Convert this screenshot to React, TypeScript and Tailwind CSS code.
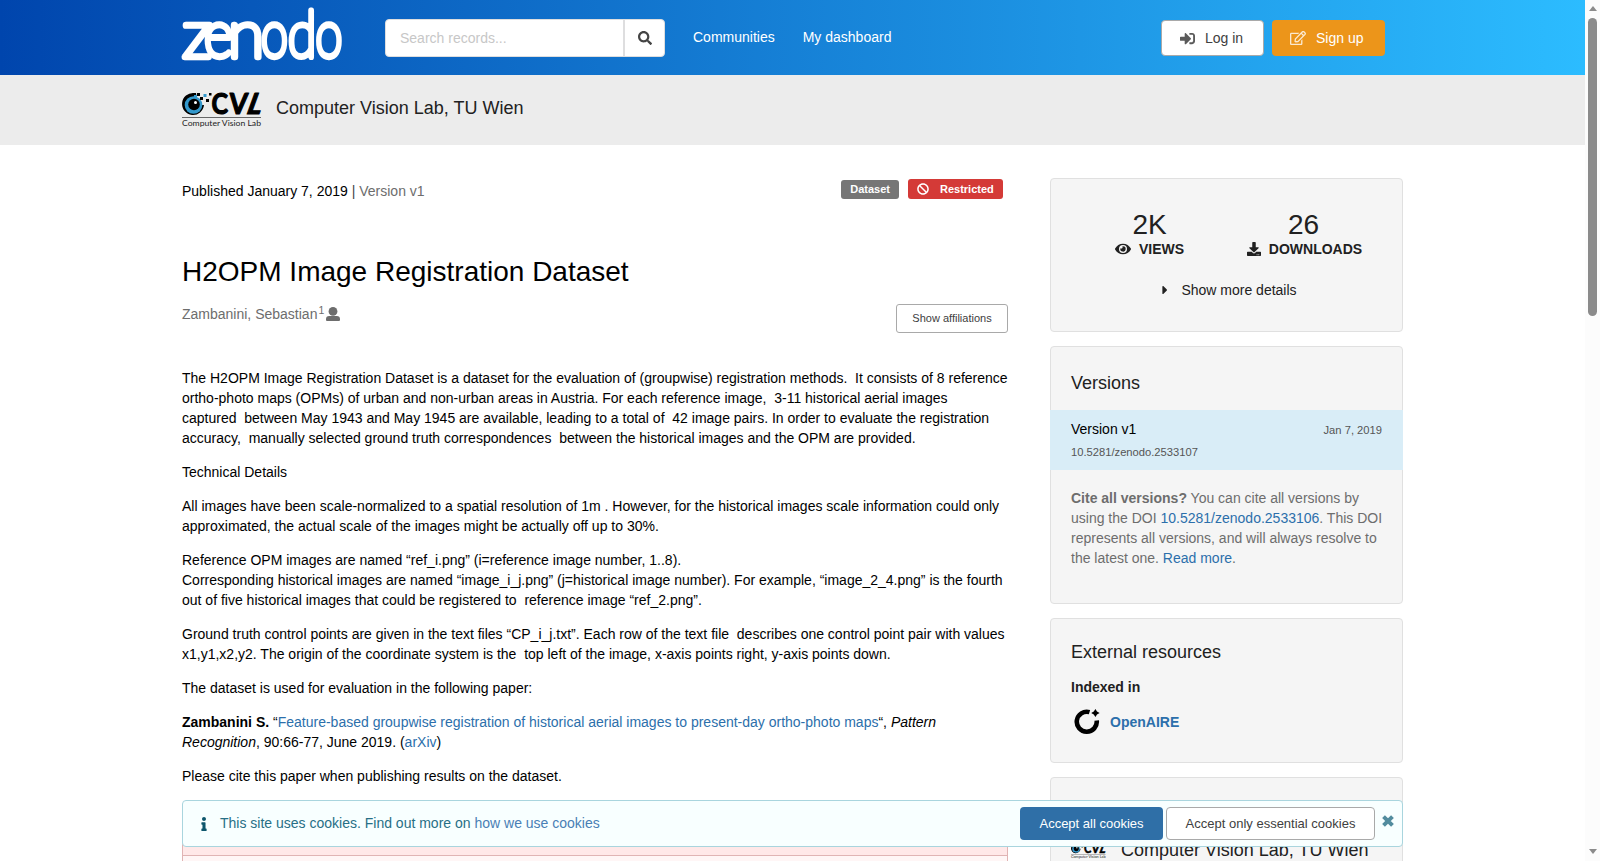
import React from "react";
import {
  FaBan,
  FaCaretRight,
  FaDownload,
  FaEye,
  FaInfo,
  FaRegEdit,
  FaSearch,
  FaSignInAlt,
} from "react-icons/fa";

const ZenodoLogo = () => (
  <svg
    width="162"
    height="75"
    viewBox="0 0 162 75"
    className="shrink-0 overflow-visible"
  >
    <g
      fill="#fff"
      stroke="#fff"
      strokeWidth="6.4"
      strokeLinejoin="round"
      strokeLinecap="round"
      fontFamily="Lato, sans-serif"
      fontWeight="100"
      fontSize="65"
    >
      <text transform="translate(0.5 56.7) scale(1.04 1)">z</text>
      <text transform="translate(22 56.7) scale(0.86 1)">e</text>
      <text transform="translate(46 56.7) scale(1.02 1)">n</text>
      <text transform="translate(79 56.7) scale(0.75 1)">o</text>
      <text transform="translate(106 56.7) scale(0.8 0.97)">d</text>
      <text transform="translate(133.5 56.7) scale(0.75 1)">o</text>
    </g>
  </svg>
);

const CvlLogo = ({ className }: { className: string }) => (
  <svg viewBox="0 0 80 36" className={`shrink-0 overflow-visible ${className}`}>
    <path d="M12 1A11 11 0 1 0 22 13L16 13L14 1z" fill="#000" />
    <circle cx="11.5" cy="13" r="8.8" fill="#3398cc" />
    <circle cx="12" cy="12.5" r="5.8" fill="#000" />
    <circle cx="13.5" cy="10.5" r="1.5" fill="#fff" />
    <path d="M15 1h3v3h-3zM18 5h3v3h-3zM27 1h2.5v2.5h-2.5zM24 7h3v3h-3z" fill="#000" />
    <path d="M21.5 2h3v3h-3zM12 3h3v3h-3z" fill="#3398cc" />
    <g
      fontFamily="Lato, sans-serif"
      fontWeight="700"
      fontSize="29"
      fill="#000"
      stroke="#000"
      strokeWidth="1.2"
      strokeLinejoin="round"
    >
      <text transform="translate(29.5 22.2) scale(0.86 1)">C</text>
      <text transform="translate(46.5 22.2) skewX(-4) scale(0.92 1)">V</text>
      <text transform="translate(63 22.2) skewX(-20) scale(0.96 1)">L</text>
    </g>
    <rect x="0" y="25" width="79" height="1" fill="#666" />
    <text
      x="0"
      y="33.5"
      textLength="79"
      lengthAdjust="spacingAndGlyphs"
      fontFamily="Lato, sans-serif"
      fontWeight="400"
      fontSize="8"
      fill="#222"
    >
      Computer Vision Lab
    </text>
  </svg>
);

const OpenAireLogo = () => (
  <svg width="26" height="26" viewBox="0 0 26 26" className="shrink-0">
    <path
      d="M15.5 3.1A10 10 0 1 0 22.7 11.5"
      fill="none"
      stroke="#000"
      strokeWidth="4.6"
    />
    <path d="M21.4 0L23 2.6L25.6 4L23 5.6L21.4 8L19.8 5.6L17.2 4L19.8 2.6z" fill="#000" />
  </svg>
);

const UserIcon = () => (
  <svg
    width="14"
    height="14"
    viewBox="0 0 14 14"
    fill="currentColor"
    className="mt-[3px] ml-0.5"
  >
    <circle cx="7" cy="4.4" r="4.4" />
    <path d="M3.2 9h7.6a3.2 3.2 0 0 1 3.2 3.2v.8a1 1 0 0 1-1 1H1a1 1 0 0 1-1-1v-.8A3.2 3.2 0 0 1 3.2 9z" />
  </svg>
);

const CloseIcon = () => (
  <svg
    width="12"
    height="12"
    viewBox="0 0 11 11"
    className="mr-2 mb-[5px] ml-[7px] text-[#528c9e]"
  >
    <path d="M1.4 1.4L9.6 9.6M9.6 1.4L1.4 9.6" stroke="currentColor" strokeWidth="3.6" />
  </svg>
);

const Header = () => (
  <header className="flex h-[75px] items-start bg-[linear-gradient(90deg,#0045ad,#2cbcff)] pl-[182px]">
    <ZenodoLogo />
    <div className="mt-[19px] ml-[41px] flex h-[38px] w-[280px] rounded border border-[#dededf] bg-white">
      <div className="flex flex-1 items-center pl-3.5 text-[#c7c7c7]">
        Search records...
      </div>
      <div className="flex w-[41px] items-center justify-center border-l-2 border-[#dededf] text-[#444]">
        <FaSearch size={14} />
      </div>
    </div>
    <nav className="mt-[27px] ml-7 flex gap-7 text-white">
      <a>Communities</a>
      <a>My dashboard</a>
    </nav>
    <div className="mt-5 mr-[200px] ml-auto flex gap-2">
      <button className="flex h-9 w-[103px] items-center rounded border border-[#a9a9a9] bg-white pl-[18px] text-[#404040]">
        <FaSignInAlt size={15} className="mr-[10px] text-[#5a5a5a]" />
        Log in
      </button>
      <button className="flex h-9 w-[113px] items-center rounded bg-[#ec951a] pl-[18px] text-white">
        <FaRegEdit size={16} className="mr-[10px] opacity-80" />
        Sign up
      </button>
    </div>
  </header>
);

const Stat = ({
  value,
  label,
  icon,
}: {
  value: string;
  label: string;
  icon: React.ReactNode;
}) => (
  <div className="flex w-[154px] flex-col items-center">
    <div className="text-[28px] leading-7">{value}</div>
    <div className="flex items-center gap-2 font-bold">
      {icon}
      {label}
    </div>
  </div>
);

const Card = ({
  className,
  children,
}: {
  className: string;
  children: React.ReactNode;
}) => (
  <section
    className={`shrink-0 rounded border border-[#e0e0e0] bg-[#f5f5f5] text-[#212121] ${className}`}
  >
    {children}
  </section>
);

const Sidebar = () => (
  <aside className="mt-[33px] flex w-[353px] flex-col gap-3.5">
    <Card className="h-[154px] pt-8">
      <div className="flex justify-center">
        <Stat value="2K" label="VIEWS" icon={<FaEye size={16} />} />
        <Stat
          value="26"
          label="DOWNLOADS"
          icon={<FaDownload size={14} className="ml-0.5" />}
        />
      </div>
      <div className="mt-[21px] flex items-center justify-center gap-[9px]">
        <FaCaretRight size={14} className="ml-0.5" />
        Show more details
      </div>
    </Card>

    <Card className="h-[258px] pt-[25px]">
      <h2 className="px-5 text-lg leading-[22px]">Versions</h2>
      <div className="-mx-px mt-4 h-[60px] bg-[#d9edf7] px-[21px] pt-2">
        <div className="flex items-center justify-between">
          <span className="text-black">Version v1</span>
          <span className="pt-0.5 text-[11.2px] text-[#555]">Jan 7, 2019</span>
        </div>
        <div className="mt-0.5 text-[11.2px] text-[#555]">
          10.5281/zenodo.2533107
        </div>
      </div>
      <p className="mt-[18px] px-5 whitespace-nowrap text-[#6d6d6d]">
        <b>Cite all versions?</b> You can cite all versions by
        <br />
        using the DOI <a className="text-[#2c6fab]">10.5281/zenodo.2533106</a>.
        This DOI
        <br />
        represents all versions, and will always resolve to
        <br />
        the latest one. <a className="text-[#2c6fab]">Read more</a>.
      </p>
    </Card>

    <Card className="h-[145px] px-5 pt-[22px]">
      <h2 className="text-lg leading-[22px]">External resources</h2>
      <div className="mt-[14px] font-bold">Indexed in</div>
      <div className="mt-3 flex items-center gap-[10px] pl-[3px]">
        <OpenAireLogo />
        <a className="font-bold text-[#2c6fab]">OpenAIRE</a>
      </div>
    </Card>

    <Card className="h-[140px] px-5 pt-[61px]">
      <div className="flex items-start">
        <CvlLogo className="mt-1 h-4 w-[35px]" />
        <h2 className="ml-[15px] text-lg leading-[22px] whitespace-nowrap">
          Computer Vision Lab, TU Wien
        </h2>
      </div>
    </Card>
  </aside>
);

const Description = () => (
  <div className="mt-[34px] flex flex-col gap-3.5 whitespace-nowrap text-black">
    <p>
      The H2OPM Image Registration Dataset is a dataset for the evaluation of
      (groupwise) registration methods.&nbsp; It consists of 8 reference
      <br />
      ortho-photo maps (OPMs) of urban and non-urban areas in Austria. For each
      reference image,&nbsp; 3-11 historical aerial images
      <br />
      captured&nbsp; between May 1943 and May 1945 are available, leading to a
      total of&nbsp; 42 image pairs. In order to evaluate the registration
      <br />
      accuracy,&nbsp; manually selected ground truth correspondences&nbsp;
      between the historical images and the OPM are provided.
    </p>
    <p>Technical Details</p>
    <p>
      All images have been scale-normalized to a spatial resolution of 1m .
      However, for the historical images scale information could only
      <br />
      approximated, the actual scale of the images might be actually off up to
      30%.
    </p>
    <p>
      Reference OPM images are named “ref_i.png” (i=reference image number,
      1..8).
      <br />
      Corresponding historical images are named “image_i_j.png” (j=historical
      image number). For example, “image_2_4.png” is the fourth
      <br />
      out of five historical images that could be registered to&nbsp; reference
      image “ref_2.png”.
    </p>
    <p>
      Ground truth control points are given in the text files “CP_i_j.txt”. Each
      row of the text file&nbsp; describes one control point pair with values
      <br />
      x1,y1,x2,y2. The origin of the coordinate system is the&nbsp; top left of
      the image, x-axis points right, y-axis points down.
    </p>
    <p>The dataset is used for evaluation in the following paper:</p>
    <p>
      <b>Zambanini S.</b> “
      <a className="text-[#2c6fab]">
        Feature-based groupwise registration of historical aerial images to
        present-day ortho-photo maps
      </a>
      “, <i>Pattern</i>
      <br />
      <i>Recognition</i>, 90:66-77, June 2019. (
      <a className="text-[#2c6fab]">arXiv</a>)
    </p>
    <p>Please cite this paper when publishing results on the dataset.</p>
  </div>
);

const CookieBanner = () => (
  <div className="absolute top-[800px] left-[182px] flex h-[47px] w-[1221px] items-center rounded border border-[#a9d5de] bg-[#f8ffff] text-[#276f86]">
    <FaInfo size={14} className="ml-[14px] text-[#0e566c]" />
    <span className="mb-px ml-[9px]">
      This site uses cookies. Find out more on{" "}
      <a className="text-[#4980b5]">how we use cookies</a>
    </span>
    <button className="ml-auto h-[33px] w-[143px] rounded bg-[#2f6fa7] text-[13px] text-white">
      Accept all cookies
    </button>
    <button className="ml-[3px] h-[33px] w-[209px] rounded border border-[#a9a9a9] bg-white text-[13px] text-[#404040]">
      Accept only essential cookies
    </button>
    <CloseIcon />
  </div>
);

const Scrollbar = () => (
  <div className="flex w-[15px] flex-col items-center bg-[#fcfcfc]">
    <div className="mt-1.5 border-x-[4.5px] border-b-[5px] border-x-transparent border-b-[#8b8b8b]" />
    <div className="mt-[7px] h-[298px] w-[9px] rounded-full bg-[#8b8b8b]" />
    <div className="mt-auto mb-[7px] border-x-[4.5px] border-t-[5px] border-x-transparent border-t-[#8b8b8b]" />
  </div>
);

const App = () => {
  return (
    <div className="relative flex h-[861px] w-[1600px] overflow-hidden bg-white font-['Liberation_Sans',Arial,sans-serif] text-sm leading-5">
      <div className="h-full w-[1585px] overflow-hidden">
        <Header />
        <div className="flex h-[70px] items-start bg-[#ececec] pl-[182px] text-[#212121]">
          <CvlLogo className="mt-[17px] h-9 w-20" />
          <h2 className="mt-[22px] ml-3.5 text-lg leading-[22px]">
            Computer Vision Lab, TU Wien
          </h2>
        </div>

        <div className="flex gap-[42px] pl-[182px]">
          <main className="w-[826px]">
            <div className="flex items-start pt-[34px]">
              <div className="pt-0.5 text-black">
                Published January 7, 2019{" "}
                <span className="text-[#6d6d6d]">
                  <span className="text-[#444]">|</span> Version v1
                </span>
              </div>
              <div className="mr-[5px] ml-auto flex items-end gap-[9px] text-[11px] font-bold text-white">
                <span className="flex h-[19px] items-center rounded-[3px] bg-[#767676] px-[9px] pb-px">
                  Dataset
                </span>
                <span className="flex h-5 w-[95px] items-center rounded-[3px] bg-[#d43a37] pl-[9px]">
                  <FaBan size={12} className="mr-[11px]" />
                  Restricted
                </span>
              </div>
            </div>

            <h1 className="mt-[53px] text-[28px] leading-9 text-black">
              H2OPM Image Registration Dataset
            </h1>

            <div className="mt-[14px] flex h-[30px] items-start text-[#6d6d6d]">
              <span>Zambanini, Sebastian</span>
              <span className="-mt-1 ml-px text-[10.5px]">1</span>
              <UserIcon />
              <button className="ml-auto h-[29px] w-28 rounded-[3px] border border-[#a9a9a9] pb-px text-[11px] text-[#404040]">
                Show affiliations
              </button>
            </div>

            <Description />

            <div className="mt-[26px] h-[80px] rounded border border-[#e0b4b4] bg-[#fff6f6]">
              <div className="h-[43px] border-b border-[#e0b4b4] bg-[#ffe8e8]" />
            </div>
          </main>
          <Sidebar />
        </div>
      </div>
      <Scrollbar />
      <CookieBanner />
    </div>
  );
};

export default App;
